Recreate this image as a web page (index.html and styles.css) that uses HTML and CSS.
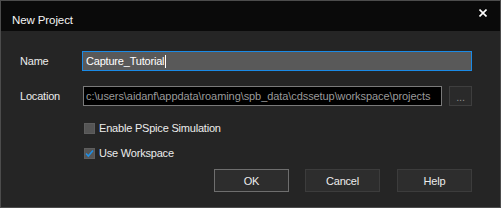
FILE: index.html
```html
<!DOCTYPE html>
<html>
<head>
<meta charset="utf-8">
<link rel="stylesheet" href="styles.css">
</head>
<body>
<div class="dialog">
  <div class="titlebar">
    <span class="title">New Project</span>
    <svg class="close" width="8" height="8" viewBox="0 0 8 8"><path d="M0.5 0.5 L7.5 7.5 M7.5 0.5 L0.5 7.5" stroke="#ffffff" stroke-width="1.6"/></svg>
  </div>
  <div class="content">
    <div class="row row-name">
      <div class="label">Name</div>
      <div class="field field-name"><span class="val">Capture_Tutorial</span><span class="caret"></span></div>
    </div>
    <div class="row row-loc">
      <div class="label">Location</div>
      <div class="field field-loc"><span class="val">c:\users\aidanf\appdata\roaming\spb_data\cdssetup\workspace\projects</span></div>
      <div class="browse">...</div>
    </div>
    <div class="check check-1">
      <div class="box"></div>
      <div class="clabel">Enable PSpice Simulation</div>
    </div>
    <div class="check check-2">
      <div class="box"><svg width="11" height="11" viewBox="0 0 11 11"><path d="M2 5.5 L4.3 8 L9 2.5" fill="none" stroke="#1e90e8" stroke-width="1.5"/></svg></div>
      <div class="clabel">Use Workspace</div>
    </div>
    <div class="buttons">
      <div class="btn btn-default">OK</div>
      <div class="btn">Cancel</div>
      <div class="btn btn-help">Help</div>
    </div>
  </div>
</div>
</body>
</html>
```
FILE: styles.css
```css
html, body {
  margin: 0;
  padding: 0;
  background: #252525;
}
.dialog {
  width: 501px;
  height: 208px;
  box-sizing: border-box;
  border: 1px solid #4c4c4c;
  background: #252525;
  font-family: "Liberation Sans", Arial, sans-serif;
  font-size: 11px;
  letter-spacing: -0.2px;
  color: #ececec;
  overflow: hidden;
}
.titlebar {
  height: 30px;
  background: #0a0a0a;
  display: flex;
  align-items: center;
  justify-content: space-between;
  padding: 0 13px 0 11px;
}
.title {
  font-size: 11.5px;
  letter-spacing: -0.1px;
  color: #f4f4f4;
  padding-top: 7px;
}
.close {
  display: block;
  margin-top: -6px;
}
.content {
  padding: 20px 28px 0 19px;
}
.row {
  display: flex;
  align-items: center;
  height: 20px;
}
.row-loc {
  margin-top: 15px;
}
.label {
  width: 62px;
  flex: none;
}
.field {
  box-sizing: border-box;
  height: 20px;
  display: flex;
  align-items: center;
  overflow: hidden;
  white-space: nowrap;
}
.field-name {
  width: 390px;
  border: 1px solid #1a8ae6;
  background: #595959;
  padding-left: 3px;
  color: #ffffff;
}
.caret {
  display: inline-block;
  width: 1px;
  height: 13px;
  background: #ffffff;
  margin-left: 1px;
}
.field-loc {
  width: 359px;
  margin-left: 1px;
  border: 1px solid #7a7a7a;
  background: #000000;
  padding-left: 2px;
  color: #9a9a9a;
  letter-spacing: -0.08px;
}
.browse {
  box-sizing: border-box;
  width: 23px;
  height: 20px;
  margin-left: 7px;
  border: 1px solid #3e3e3e;
  background: #2a2a2a;
  color: #8a8a8a;
  display: flex;
  align-items: center;
  justify-content: center;
  padding-top: 1px;
}
.check {
  display: flex;
  align-items: center;
  height: 11px;
  margin-left: 64px;
}
.check-1 {
  margin-top: 17px;
}
.check-2 {
  margin-top: 14px;
}
.box {
  box-sizing: border-box;
  width: 11px;
  height: 11px;
  background: #555555;
  border: 1px solid #5e5e5e;
  flex: none;
  position: relative;
}
.box svg {
  position: absolute;
  left: -1px;
  top: -1px;
}
.clabel {
  margin-left: 4px;
  line-height: 11px;
  white-space: nowrap;
}
.buttons {
  display: flex;
  justify-content: flex-end;
  gap: 16px;
  margin-top: 10px;
}
.btn {
  box-sizing: border-box;
  width: 75px;
  height: 23px;
  border: 1px solid #3c3c3c;
  background: #2d2d2d;
  display: flex;
  align-items: center;
  justify-content: center;
  color: #ececec;
}
.btn-default {
  border-color: #6e6e6e;
}
.btn-help {
  margin-left: 1px;
}
```
